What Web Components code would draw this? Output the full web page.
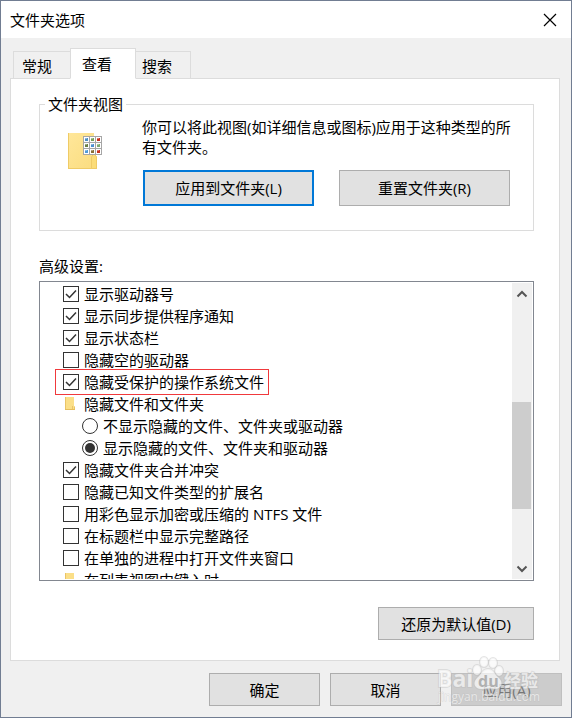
<!DOCTYPE html>
<html lang="zh-CN">
<head>
<meta charset="utf-8">
<title>文件夹选项</title>
<style>
  body {
    margin: 0;
    font: 15px/20px "Open Sans", "Noto Sans CJK SC", sans-serif;
    color: #000;
  }
</style>
</head>
<body>
<dialog-window caption="文件夹选项">
  <tab-button slot="tabs">常规</tab-button>
  <tab-button slot="tabs" selected>查看</tab-button>
  <tab-button slot="tabs">搜索</tab-button>

  <view-group caption="文件夹视图">
    你可以将此视图(如详细信息或图标)应用于这种类型的所有文件夹。
    <push-button slot="actions" size="tall" primary>应用到文件夹(L)</push-button>
    <push-button slot="actions" size="tall">重置文件夹(R)</push-button>
  </view-group>

  <settings-list caption="高级设置:">
    <setting-item type="checkbox" checked>显示驱动器号</setting-item>
    <setting-item type="checkbox" checked>显示同步提供程序通知</setting-item>
    <setting-item type="checkbox" checked>显示状态栏</setting-item>
    <setting-item type="checkbox">隐藏空的驱动器</setting-item>
    <setting-item type="checkbox" checked marked>隐藏受保护的操作系统文件</setting-item>
    <setting-item type="folder">隐藏文件和文件夹</setting-item>
    <setting-item type="radio">不显示隐藏的文件、文件夹或驱动器</setting-item>
    <setting-item type="radio" checked>显示隐藏的文件、文件夹和驱动器</setting-item>
    <setting-item type="checkbox" checked>隐藏文件夹合并冲突</setting-item>
    <setting-item type="checkbox">隐藏已知文件类型的扩展名</setting-item>
    <setting-item type="checkbox">用彩色显示加密或压缩的 NTFS 文件</setting-item>
    <setting-item type="checkbox">在标题栏中显示完整路径</setting-item>
    <setting-item type="checkbox">在单独的进程中打开文件夹窗口</setting-item>
    <setting-item type="folder">在列表视图中键入时</setting-item>
  </settings-list>

  <push-button slot="restore" size="wide">还原为默认值(D)</push-button>

  <push-button slot="footer">确定</push-button>
  <push-button slot="footer">取消</push-button>
  <push-button slot="footer" disabled>应用(A)</push-button>
  <site-watermark slot="overlay"></site-watermark>
</dialog-window>

<script>
(function() {
    class BaseElement extends HTMLElement {
        constructor() {
            super();
            this.attachShadow({ mode: 'open' });
        }

        connectedCallback() {
            const template = document.createElement('template');
            template.innerHTML = this.markup();
            this.shadowRoot.replaceChildren(template.content.cloneNode(true));
        }
    }

    class DialogWindow extends BaseElement {
        markup() {
            return `
            <style>
              :host {
                display: block;
                position: relative;
                border: 1px solid #717d92;
                background: #f0f0f0;
              }
              header {
                display: flex;
                align-items: center;
                justify-content: space-between;
                height: 37px;
                padding: 0 14px 0 9px;
                background: #fff;
              }
              h1 { margin: 0; font: inherit; }
              .close {
                display: flex;
                padding: 0;
                border: 0;
                background: none;
              }
              nav {
                display: flex;
                align-items: flex-end;
                padding: 10px 12px 0;
              }
              main {
                margin: -1px 11px 0 9px;
                padding: 15px 25px 20px 28px;
                border: 1px solid #dcdcdc;
                background: #fff;
              }
              .restore {
                display: flex;
                justify-content: flex-end;
                margin-top: 26px;
              }
              footer {
                display: flex;
                justify-content: flex-end;
                gap: 10px;
                padding: 12px 9px 11px;
              }
            </style>
            <header>
              <h1>${this.getAttribute('caption')}</h1>
              <button class="close" aria-label="关闭">
                <svg width="14" height="14" viewBox="0 0 14 14">
                  <path d="M1 1 L13 13 M13 1 L1 13" stroke="#000" stroke-width="1.2" fill="none"/>
                </svg>
              </button>
            </header>
            <nav role="tablist"><slot name="tabs"></slot></nav>
            <main>
              <slot></slot>
              <div class="restore"><slot name="restore"></slot></div>
            </main>
            <footer><slot name="footer"></slot></footer>
            <slot name="overlay"></slot>
            `;
        }
    }

    class TabButton extends BaseElement {
        markup() {
            return `
            <style>
              :host { display: block; }
              button {
                display: block;
                box-sizing: border-box;
                width: 55px;
                height: 28px;
                padding: 2px 0 0 6px;
                border: 1px solid #dcdcdc;
                border-left: 0;
                background: #f0f0f0;
                font: inherit;
                color: inherit;
                text-align: left;
              }
              :host(:first-child) button {
                width: 57px;
                padding-left: 8px;
                border-left: 1px solid #dcdcdc;
                border-right: 0;
              }
              :host([selected]) { position: relative; }
              :host([selected]) button {
                width: 66px;
                height: 31px;
                padding: 0 0 0 11px;
                border-left: 1px solid #dcdcdc;
                border-bottom-color: #fff;
                background: #fff;
              }
            </style>
            <button role="tab" aria-selected="${this.hasAttribute('selected')}"><slot></slot></button>
            `;
        }
    }

    class PushButton extends BaseElement {
        markup() {
            return `
            <style>
              :host { display: block; width: 111px; }
              :host([size="wide"]) { width: 156px; }
              :host([size="tall"]) { width: auto; }
              button {
                display: block;
                box-sizing: border-box;
                width: 100%;
                height: 33px;
                padding: 0;
                border: 1px solid #adadad;
                background: #e1e1e1;
                font: inherit;
                color: #000;
              }
              :host([size="tall"]) button { height: 36px; }
              :host([primary]) button { border: 2px solid #0078d7; }
              button:disabled {
                border-color: #bfbfbf;
                background: #ccc;
                color: #777;
              }
            </style>
            <button ${this.hasAttribute('disabled') ? 'disabled' : ''}><slot></slot></button>
            `;
        }
    }

    class ViewGroup extends BaseElement {
        thumbs() {
            const colors = ['#4d8fc4', '#7aa05a', '#c8321e', '#6a7f45', '#4d8fd0', '#7fa870', '#4d9ad8', '#8a7038', '#c8321e'];
            return colors.map((color, i) => {
                const x = 17 + (i % 3) * 6;
                const y = 6 + Math.floor(i / 3) * 6;
                return `<rect x="${x}" y="${y}" width="5" height="5" fill="#fff"/>
                  <rect x="${x + 1}" y="${y + 1}" width="3" height="3" fill="${color}"/>
                  <path d="M${x + 1} ${y + 1}h2v1h-2z" fill="#fff" opacity=".35"/>`;
            }).join('');
        }

        markup() {
            return `
            <style>
              :host { display: block; }
              fieldset {
                display: block;
                min-width: 0;
                margin: 0;
                padding: 3px 15px 24px 27px;
                border: 1px solid #dcdcdc;
              }
              legend { margin-left: -22px; padding: 0 3px; }
              .row { display: flex; gap: 39px; }
              svg { flex: none; margin-top: 14px; }
              .text { flex: 1; }
              p { margin: 0; }
              .actions {
                display: grid;
                grid-template-columns: 1fr 1fr;
                gap: 25px;
                margin-top: 13px;
                padding: 0 8px 0 1px;
              }
            </style>
            <fieldset>
              <legend>${this.getAttribute('caption')}</legend>
              <div class="row">
                <svg width="36" height="40" viewBox="0 0 36 40">
                  <defs>
                    <linearGradient id="paper" x2="1" y2="1">
                      <stop offset="0" stop-color="#ffe79a"/>
                      <stop offset="1" stop-color="#fadc7e"/>
                    </linearGradient>
                  </defs>
                  <path d="M1 2h26v20l3 4v12H1z" fill="url(#paper)"/>
                  <path d="M1 2h1v36H1z M1 37h29v1H1z" fill="#efcb66"/>
                  <path d="M24.5 37.5V26l2-3h1l2 3v11.5z" fill="#fbdc78" stroke="#efcb66"/>
                  <rect x="16" y="5" width="19" height="19" fill="#a6a6a6"/>
                  ${this.thumbs()}
                </svg>
                <div class="text">
                  <p><slot></slot></p>
                  <div class="actions"><slot name="actions"></slot></div>
                </div>
              </div>
            </fieldset>
            `;
        }
    }

    class SettingsList extends BaseElement {
        markup() {
            return `
            <style>
              :host { display: block; margin-top: 25px; }
              .list {
                display: flex;
                box-sizing: border-box;
                height: 300px;
                margin-top: 5px;
                padding: 1px 1px 1px 0;
                border: 1px solid #828790;
              }
              .items { flex: 1; overflow: hidden; }
              .bar {
                display: flex;
                flex-direction: column;
                width: 20px;
                background: #f0f0f0;
              }
              .bar button {
                display: flex;
                align-items: center;
                justify-content: center;
                height: 21px;
                padding: 0;
                border: 0;
                background: none;
              }
              .before { flex: 98; }
              .thumb { flex: 107; margin-right: 1px; background: #cdcdcd; }
              .after { flex: 49; }
            </style>
            <div id="caption">${this.getAttribute('caption')}</div>
            <div class="list" role="group" aria-labelledby="caption">
              <div class="items"><slot></slot></div>
              <div class="bar">
                <button aria-label="向上滚动">
                  <svg width="12" height="8" viewBox="0 0 12 8"><path d="M1.5 6.5 L6 2 L10.5 6.5" stroke="#555" stroke-width="2" fill="none"/></svg>
                </button>
                <div class="before"></div>
                <div class="thumb"></div>
                <div class="after"></div>
                <button aria-label="向下滚动">
                  <svg width="12" height="8" viewBox="0 0 12 8"><path d="M1.5 1.5 L6 6 L10.5 1.5" stroke="#555" stroke-width="2" fill="none"/></svg>
                </button>
              </div>
            </div>
            `;
        }
    }

    class SettingItem extends BaseElement {
        markup() {
            const type = this.getAttribute('type');
            const checked = this.hasAttribute('checked') ? 'checked' : '';
            const style = `
            <style>
              :host { display: flex; height: 22px; padding-left: 23px; }
              :host([type="radio"]) { padding-left: 42px; }
              label, .folder {
                display: flex;
                align-items: center;
                gap: 5px;
                white-space: nowrap;
              }
              .folder svg { width: 16px; flex: none; }
              .control { display: grid; width: 16px; height: 16px; }
              .control > * { grid-area: 1 / 1; }
              input {
                appearance: none;
                box-sizing: border-box;
                width: 16px;
                height: 16px;
                margin: 0;
                border: 1px solid #333;
                background: #fff;
              }
              input[type="radio"] { border-radius: 50%; }
              .mark { display: none; z-index: 1; pointer-events: none; }
              input:checked + .mark { display: block; }
              :host([marked]) label { position: relative; }
              :host([marked]) label::after {
                content: "";
                position: absolute;
                inset: -2px -5px -2px -8px;
                border: 1px solid #f0393c;
              }
            </style>`;

            if (type === 'folder') {
                return `${style}
                <div class="folder">
                  <svg width="16" height="16" viewBox="0 0 16 16">
                    <path d="M2 1h9v9l1 1v3H2z" fill="#fbdf88"/>
                    <path d="M2 1h1v13H2z M9 10h1v4H9z M11 10l1 1v3h-1z" fill="#eac467"/>
                    <path d="M2 13h10v1H2z" fill="#e6be5c"/>
                  </svg>
                  <span><slot></slot></span>
                </div>`;
            }

            const mark = type === 'radio'
                ? '<circle cx="8" cy="8" r="5" fill="#333"/>'
                : '<path d="M3 8 L6.5 11.5 L13 4.5" stroke="#333" stroke-width="1.5" fill="none"/>';
            return `${style}
            <label>
              <span class="control">
                <input type="${type}" name="hidden-files" ${checked}>
                <svg class="mark" width="16" height="16" viewBox="0 0 16 16">${mark}</svg>
              </span>
              <span><slot></slot></span>
            </label>`;
        }
    }

    class SiteWatermark extends BaseElement {
        markup() {
            return `
            <style>
              :host {
                display: block;
                position: absolute;
                right: 29px;
                bottom: 8px;
                pointer-events: none;
              }
              svg { display: block; }
              text, .paw {
                fill: #fff;
                fill-opacity: .65;
                stroke: #bbb;
                stroke-opacity: .4;
                stroke-width: 2px;
                paint-order: stroke;
              }
              text { font-family: "Open Sans", "Noto Sans CJK SC", sans-serif; }
              .name { font-size: 23px; font-weight: 700; }
              .du { font-size: 16px; font-weight: 700; fill: #b0b0b0; fill-opacity: 1; stroke: none; }
              .cn { font-size: 17px; font-weight: 700; }
              .url { font-size: 12px; fill-opacity: .6; stroke-width: 1px; }
            </style>
            <svg width="106" height="56" viewBox="0 0 106 56">
              <text class="name" x="1" y="34">Bai</text>
              <g class="paw">
                <ellipse cx="41" cy="17" rx="4" ry="5"/>
                <ellipse cx="48" cy="9" rx="4" ry="5"/>
                <ellipse cx="57" cy="10" rx="4" ry="5"/>
                <ellipse cx="63" cy="18" rx="4" ry="5"/>
                <path d="M52 16 C46 16 46 21 41 25 C36 30 39 36 45 36 C49 36 54 35 59 36 C65 36 68 30 63 25 C58 21 58 16 52 16z"/>
              </g>
              <text class="du" x="42" y="34">du</text>
              <text class="cn" x="68" y="34">经验</text>
              <text class="url" x="2" y="48">jingyan.baidu.com</text>
            </svg>
            `;
        }
    }

    window.customElements.define('dialog-window', DialogWindow);
    window.customElements.define('tab-button', TabButton);
    window.customElements.define('push-button', PushButton);
    window.customElements.define('view-group', ViewGroup);
    window.customElements.define('settings-list', SettingsList);
    window.customElements.define('setting-item', SettingItem);
    window.customElements.define('site-watermark', SiteWatermark);
})();
</script>
</body>
</html>
